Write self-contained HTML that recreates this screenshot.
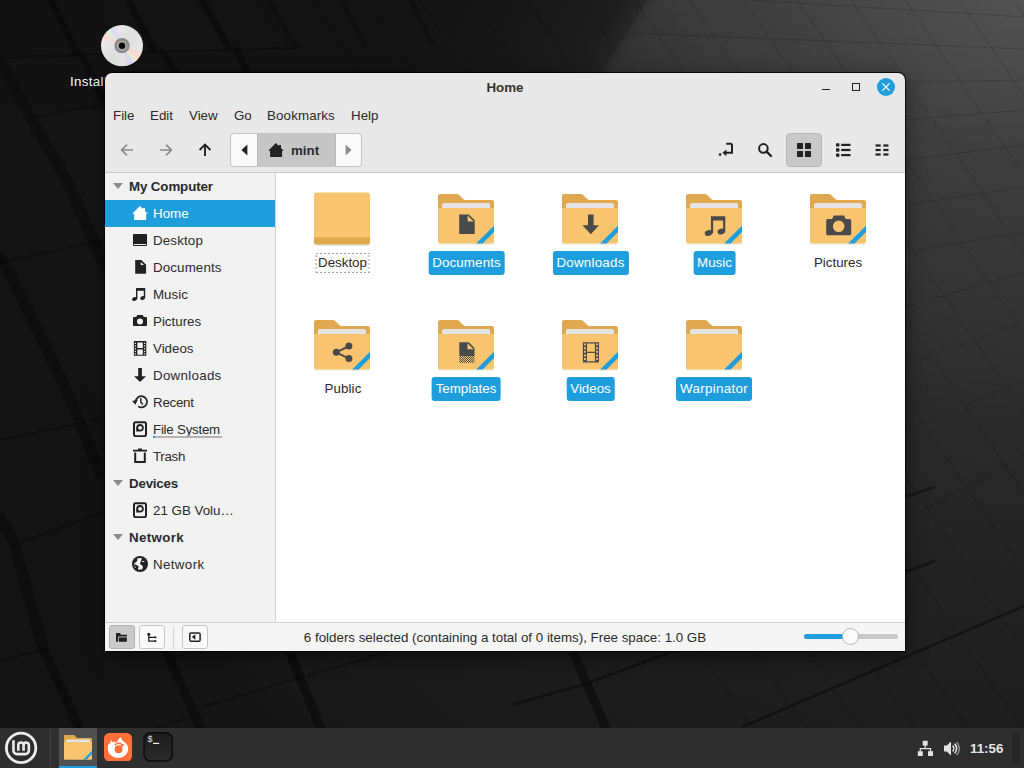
<!DOCTYPE html>
<html>
<head>
<meta charset="utf-8">
<title>Home</title>
<style>
*{box-sizing:border-box;margin:0;padding:0}
html,body{width:1024px;height:768px;overflow:hidden}
body{font-family:"Liberation Sans",sans-serif;font-size:13.33px;color:#2a2a2a;position:relative;background:#161616}
.abs{position:absolute}
#wall{position:absolute;left:0;top:0;width:1024px;height:768px}
/* desktop icon */
#dlabel{position:absolute;left:70px;top:74px;letter-spacing:.3px;color:#fff;font-size:13.33px;white-space:nowrap;text-shadow:0 1px 2px #000}
/* window */
#win{position:absolute;left:105px;top:73px;width:800px;height:578px;background:#e8e8e8;border-radius:7px 7px 0 0;box-shadow:0 0 0 1px rgba(0,0,0,.8),0 6px 20px rgba(0,0,0,.5);overflow:hidden}
#title{position:absolute;left:0;top:0;width:800px;height:28px;text-align:center;font-weight:bold;line-height:30px;color:#333}
.mi{position:absolute;top:35px;line-height:16px;white-space:nowrap}
#tbline{position:absolute;left:0;top:99px;width:800px;height:1px;background:#c9c9c9}
#pathbar{position:absolute;left:125px;top:60px;width:132px;height:34px;border:1px solid #c4c4c4;border-radius:4px;background:#fafafa;overflow:hidden}
#pathmid{position:absolute;left:26px;top:0;width:79px;height:32px;background:#c6c6c6;border-left:1px solid #b8b8b8;border-right:1px solid #b8b8b8}
#viewbtn{position:absolute;left:681px;top:60px;width:36px;height:34px;border:1px solid #b6b6b6;border-radius:4px;background:#c8c8c8}
/* sidebar */
#side{position:absolute;left:0;top:100px;width:170px;height:449px;background:#f2f2f2}
#sideline{position:absolute;left:170px;top:100px;width:1px;height:449px;background:#d4d4d4}
#main{position:absolute;left:171px;top:100px;width:629px;height:449px;background:#fff}
.row{position:absolute;left:0;width:170px;height:27px;line-height:27px;white-space:nowrap}
.row span{position:absolute;left:48px;top:0}
.row svg{position:absolute;left:27px;top:5px;width:16px;height:16px}
.hdr{font-weight:bold}
.hdr span{left:24px}
.hdr i{position:absolute;left:8px;top:10px;width:0;height:0;border-left:5px solid transparent;border-right:5px solid transparent;border-top:6px solid #8c8c8c}
.sel{background:#1f9ede;color:#fff}
.cap{position:absolute;left:48px;top:20px;width:69px;height:2px;background:#b4b4b4}
.cap:before{content:"";position:absolute;left:0;top:0;width:2px;height:2px;background:#1f9ede}
/* status */
#status{position:absolute;left:0;top:549px;width:800px;height:29px;background:#f5f5f5;border-top:1px solid #d0d0d0}
#stext{position:absolute;left:0;top:0;width:800px;text-align:center;line-height:29px;white-space:nowrap}
.sb{position:absolute;top:2px;width:26px;height:24px;border:1px solid #c6c6c6;border-radius:3px;background:#fafafa}
/* files */
.fi{position:absolute;width:64px;height:64px}
.fl{position:absolute;height:24px;line-height:24px;border-radius:3px;text-align:center;white-space:nowrap;transform:translateX(-50%);padding:0 4px}
.fl.s{background:#1f9ede;color:#fff}
/* panel */
#panel{position:absolute;left:0;top:728px;width:1024px;height:40px;background:#2e2e2e}
</style>
</head>
<body>
<svg id="wall" viewBox="0 0 1024 768">
<defs>
<radialGradient id="rg" gradientUnits="userSpaceOnUse" cx="1024" cy="0" r="1050">
<stop offset="0" stop-color="#fff" stop-opacity=".23"/>
<stop offset=".19" stop-color="#fff" stop-opacity=".165"/>
<stop offset=".31" stop-color="#fff" stop-opacity=".13"/>
<stop offset=".40" stop-color="#fff" stop-opacity=".095"/>
<stop offset=".57" stop-color="#fff" stop-opacity=".06"/>
<stop offset=".72" stop-color="#fff" stop-opacity=".04"/>
<stop offset=".95" stop-color="#fff" stop-opacity=".015"/>
<stop offset="1" stop-color="#fff" stop-opacity="0"/>
</radialGradient>
<linearGradient id="cut" gradientUnits="userSpaceOnUse" x1="435" y1="-50" x2="627" y2="57.400">
<stop offset="0" stop-color="#121212" stop-opacity=".96"/><stop offset=".6" stop-color="#141414" stop-opacity=".78"/><stop offset=".86" stop-color="#161616" stop-opacity=".6"/><stop offset="1" stop-color="#181818" stop-opacity="0"/>
</linearGradient>
<linearGradient id="tl" x1="0" y1="0" x2="0" y2="1"><stop offset="0" stop-color="#fff" stop-opacity=".05"/><stop offset="1" stop-color="#fff" stop-opacity="0"/></linearGradient>
</defs>
<rect width="1024" height="768" fill="#141414"/>
<rect width="1024" height="768" fill="url(#rg)"/>
<path d="M648 0H1024V170H540z" fill="url(#tl)"/>
<!-- dark top-left mass with diagonal edge -->
<path d="M0 0H680L600 110H0z" fill="url(#cut)"/>
<rect x="0" y="0" width="105" height="768" fill="#131313" opacity=".6"/>
<!-- tile lines: right (light) zone -->
<g stroke="#000" stroke-opacity=".15" stroke-width="1" fill="none">
<path d="M1013 0 1024 16M959 0 1024 96M905 0 1024 175M851 0 1024 254M797 0 1024 334M743 0 1024 413M689 0 1024 493M635 0 1024 572M581 0 1024 651M527 0 1022 728M473 0 968 728M419 0 914 728M365 0 860 728M311 0 806 728M257 0 752 728"/>
<path d="M628 33 1024 49M752 0 1024 17M905 82 1024 80M905 120 1024 110M905 160 1024 145M905 205 1024 187M905 252 1024 232M905 307 1024 272M905 365 1024 322M905 430 1024 380M905 520 1024 455"/>
</g>
<!-- tile gaps: dark zone -->
<g stroke="#080808" stroke-opacity=".6" fill="none" stroke-linecap="butt">
<path stroke-width="9" d="M43 648 80 730M166 650 201 730M289 650 321 730M572 650 606 728"/>
<path stroke-width="7" d="M50 -2 78 55M80 52 105 102M127 -2 155 52M160 50 180 78M201 -2 230 50M236 48 250 78"/>
<path stroke-width="11" stroke-opacity=".5" d="M-2 57 30 117 66 179 100 255 110 275M-2 255 9 272 44 343 71 400 102 478M-2 514 13 540 44 651"/>
<path stroke-width="5" stroke-opacity=".35" d="M267 -2 296 48M340 -2 366 46M410 -2 432 44"/>
<path stroke-width="2" stroke-opacity=".4" d="M0 660 43 650M199 708 292 680 392 651M156 728 199 714M0 58 78 55 155 52 230 50 296 48M30 118 105 104M0 262 105 240M0 440 105 418M12 545 105 512"/>
<path stroke-width="2.500" stroke-opacity=".5" d="M512 705 582 685 677 650M742 727 1024 606M905 497 935 487M905 572 935 561"/>
</g>
</svg>

<svg class="abs" style="left:99px;top:23px" width="46" height="46" viewBox="0 0 46 46">
<defs><linearGradient id="dg" x1="0" y1="0" x2="1" y2="1"><stop offset="0" stop-color="#f2f2f2"/><stop offset=".5" stop-color="#dedede"/><stop offset="1" stop-color="#f0f0f0"/></linearGradient>
<clipPath id="dc"><ellipse cx="23" cy="22.700" rx="21" ry="20.600"/></clipPath></defs>
<ellipse cx="23" cy="23.600" rx="21" ry="20.600" fill="#000" opacity=".35"/>
<ellipse cx="23" cy="22.700" rx="21" ry="20.600" fill="url(#dg)"/>
<g clip-path="url(#dc)" opacity=".55" transform="rotate(-14 23 22.700)"><path d="M23 22.700 4 10 9 4z" fill="#ffd0c0"/><path d="M23 22.700 9 4 14 1z" fill="#c8f0c8"/><path d="M23 22.700 14 1 19 0z" fill="#c8d0ff"/><path d="M23 22.700 19 0 23 0z" fill="#f0c8f0"/><path d="M23 22.700 42 35 37 42z" fill="#ffd0c0"/><path d="M23 22.700 37 42 32 45z" fill="#f8f0b0"/><path d="M23 22.700 32 45 27 46z" fill="#c8d0ff"/><path d="M23 22.700 27 46 23 46z" fill="#f0c8f0"/></g>
<circle cx="23" cy="22.700" r="7.600" fill="#8a8a8a"/><circle cx="23" cy="22.700" r="5.200" fill="#a6a6a6"/><circle cx="23" cy="22.700" r="3.200" fill="#0c0c0c"/>
</svg>
<div id="dlabel">Install Linux Mint</div>

<div id="win">
<div id="title">Home</div>
<div class="mi" style="left:8px">File</div>
<div class="mi" style="left:45px">Edit</div>
<div class="mi" style="left:84px">View</div>
<div class="mi" style="left:129px">Go</div>
<div class="mi" style="left:162px;letter-spacing:.14px">Bookmarks</div>
<div class="mi" style="left:246px">Help</div>
<div id="pathbar"><svg class="abs" style="left:10px;top:10px" width="7" height="12" viewBox="0 0 7 12"><path d="M6.4.4v11.2L.4 6z" fill="#222"/></svg>
<svg class="abs" style="left:114px;top:10px" width="7" height="12" viewBox="0 0 7 12"><path d="M.6.4v11.2L6.6 6z" fill="#8c8c8c"/></svg>
<div id="pathmid"><svg class="abs" style="left:10px;top:8px" width="16" height="16" viewBox="0 0 16 16"><path fill="#222" d="M7.900 1 .2 8.700h1.900V15h12V8.700h1.700L13 6V3.100h-2V4z"/></svg><b style="position:absolute;left:33px;top:1px;line-height:32px">mint</b>
</div></div>
<div id="viewbtn"></div>
<!-- window buttons (win-relative: abs - (105,73)) -->
<div class="abs" style="left:717px;top:16px;width:8px;height:1px;background:#1e1e1e"></div>
<div class="abs" style="left:747px;top:10px;width:8px;height:8px;border:1px solid #1e1e1e"></div>
<svg class="abs" style="left:771px;top:4px" width="20" height="20" viewBox="0 0 20 20"><circle cx="10" cy="10" r="9" fill="#1f9ede"/><path d="M6.4 6.4l7.2 7.2M13.6 6.4l-7.2 7.2" stroke="#fff" stroke-width="1.25"/></svg>
<!-- nav arrows -->
<svg class="abs" style="left:15px;top:70px" width="14" height="14" viewBox="0 0 14 14"><path d="M13 7H2M7 1.6 1.6 7 7 12.4" fill="none" stroke="#8c8c8c" stroke-width="1.7"/></svg>
<svg class="abs" style="left:54px;top:70px" width="14" height="14" viewBox="0 0 14 14"><path d="M1 7h11M7 1.6 12.4 7 7 12.4" fill="none" stroke="#8c8c8c" stroke-width="1.7"/></svg>
<svg class="abs" style="left:93px;top:70px" width="14" height="14" viewBox="0 0 14 14"><path d="M7 13V2M1.6 7 7 1.6 12.4 7" fill="none" stroke="#222" stroke-width="1.9"/></svg>
<!-- right toolbar icons -->
<svg class="abs" style="left:613px;top:69px" width="16" height="16" viewBox="0 0 16 16"><circle cx="2.100" cy="12.600" r="1.350" fill="#222"/><path d="M8.200 1.800h4.600a1.200 1.200 0 0 1 1.200 1.200v7.800H7" fill="none" stroke="#222" stroke-width="2"/><path d="M4.400 10.800 8.400 7.400v6.800z" fill="#222"/></svg>
<svg class="abs" style="left:652px;top:69px" width="16" height="16" viewBox="0 0 16 16"><circle cx="6.4" cy="6.4" r="4.3" fill="none" stroke="#222" stroke-width="2"/><path d="M9.6 9.6 14 14" stroke="#222" stroke-width="2.4" stroke-linecap="round"/></svg>
<svg class="abs" style="left:691px;top:69px" width="16" height="16" viewBox="0 0 16 16"><g fill="#222"><rect x="1" y="1" width="6" height="6" rx=".6"/><rect x="9" y="1" width="6" height="6" rx=".6"/><rect x="1" y="9" width="6" height="6" rx=".6"/><rect x="9" y="9" width="6" height="6" rx=".6"/></g></svg>
<svg class="abs" style="left:730px;top:69px" width="16" height="16" viewBox="0 0 16 16"><g fill="#222"><rect x="1" y="1.2" width="3.4" height="3.4" rx=".6"/><rect x="1" y="6.3" width="3.4" height="3.4" rx=".6"/><rect x="1" y="11.4" width="3.4" height="3.4" rx=".6"/><rect x="6.200" y="1.800" width="9.300" height="2.200"/><rect x="6.200" y="6.900" width="9.300" height="2.200"/><rect x="6.200" y="12" width="9.300" height="2.200"/></g></svg>
<svg class="abs" style="left:769px;top:69px" width="16" height="16" viewBox="0 0 16 16"><g fill="#222"><rect x="1.500" y="2.400" width="5.200" height="2.200"/><rect x="9.300" y="2.400" width="5.200" height="2.200"/><rect x="1.500" y="6.900" width="5.200" height="2.200"/><rect x="9.300" y="6.900" width="5.200" height="2.200"/><rect x="1.500" y="11.400" width="5.200" height="2.200"/><rect x="9.300" y="11.400" width="5.200" height="2.200"/></g></svg>

<div id="tbline"></div>
<div id="side">
<div class="row hdr" style="top:0"><i></i><span style="letter-spacing:-0.12px">My Computer</span></div>
<div class="row sel" style="top:27px"><svg viewBox="0 0 16 16"><path fill="#fff" d="M7.900 1 .2 8.700h1.900V15h12V8.700h1.700L13 6V3.100h-2V4z"/></svg><span>Home</span></div>
<div class="row" style="top:54px"><svg viewBox="0 0 16 16"><rect x="1" y="2" width="14" height="12" rx="1" fill="#222"/><rect x="2" y="12" width="12" height="1" fill="#f2f2f2"/></svg><span style="letter-spacing:0.16px">Desktop</span></div>
<div class="row" style="top:81px"><svg viewBox="0 0 16 16"><path fill="#222" d="M3.2 1.100h6.200l4.700 4.650V14.800H3.200z"/><path fill="#f2f2f2" d="M8.800 3.100v3h3.200z"/></svg><span style="letter-spacing:0.13px">Documents</span></div>
<div class="row" style="top:108px"><svg viewBox="0 0 16 16"><g fill="#222"><path d="M4 1.900h9.200v10.200h-1.400V4.700H5.400v8.400H4z"/><ellipse cx="2.500" cy="13" rx="2.500" ry="1.900" transform="rotate(-18 2.500 13)"/><ellipse cx="10.700" cy="12" rx="2.500" ry="1.900" transform="rotate(-18 10.700 12)"/></g></svg><span>Music</span></div>
<div class="row" style="top:135px"><svg viewBox="0 0 16 16"><path fill="#222" fill-rule="evenodd" d="M5.2 2h5.6l.9 2H14a1 1 0 0 1 1 1v7a1 1 0 0 1-1 1H2a1 1 0 0 1-1-1V5a1 1 0 0 1 1-1h2.3zM8 5.4a3 3 0 1 0 0 6 3 3 0 0 0 0-6z"/></svg><span>Pictures</span></div>
<div class="row" style="top:162px"><svg viewBox="0 0 16 16"><path fill="#222" fill-rule="evenodd" d="M1.9 1.1h12.400v14.700H1.900zM5.400 2.400v5.500h5.450V2.400zM5.400 9.400v5.400h5.450V9.400zM2.80 2.80h1.2v1.2h-1.2zM12.00 2.80h1.2v1.2h-1.2zM2.80 5.30h1.2v1.2h-1.2zM12.00 5.30h1.2v1.2h-1.2zM2.80 8.10h1.2v1.2h-1.2zM12.00 8.10h1.2v1.2h-1.2zM2.80 10.70h1.2v1.2h-1.2zM12.00 10.70h1.2v1.2h-1.2zM2.80 13.20h1.2v1.2h-1.2zM12.00 13.20h1.2v1.2h-1.2z"/></svg><span>Videos</span></div>
<div class="row" style="top:189px"><svg viewBox="0 0 16 16"><path fill="#222" d="M6.200 .9h3.700v8.400H14L8.050 15.100 2.100 9.300h4.100z"/></svg><span style="letter-spacing:0.29px">Downloads</span></div>
<div class="row" style="top:216px"><svg viewBox="0 0 16 16"><path fill="none" stroke="#222" stroke-width="1.700" d="M6.200 12.400A5.600 5.600 0 1 0 3.800 7.400"/><path fill="#222" d="M.1 7 5.800 5.700 3.400 10.800z"/><path fill="none" stroke="#222" stroke-width="1.400" d="M8.800 3.900v4.400l2.200 2.100"/></svg><span style="letter-spacing:-0.25px">Recent</span></div>
<div class="row" style="top:243px"><svg viewBox="0 0 16 16"><rect x="2" y="1.2" width="12" height="14" rx="1.6" fill="none" stroke="#222" stroke-width="2"/><path fill="#222" fill-rule="evenodd" d="M8 3a3.800 3.800 0 0 1 0 7.600H4.200V6.800A3.800 3.800 0 0 1 8 3zM8.100 4.900a1.950 1.950 0 1 0 0 3.900 1.950 1.950 0 0 0 0-3.900z"/></svg><span style="letter-spacing:-0.24px">File System</span><b class="cap"></b></div>
<div class="row" style="top:270px"><svg viewBox="0 0 16 16"><path fill="#222" d="M6 .6h4v1.2h5v1.7H1V1.8h5z"/><path fill="none" stroke="#222" stroke-width="2" d="M3.2 4.5v9.6h9.6V4.5"/></svg><span style="letter-spacing:-0.30px">Trash</span></div>
<div class="row hdr" style="top:297px"><i></i><span style="letter-spacing:-0.20px">Devices</span></div>
<div class="row" style="top:324px"><svg viewBox="0 0 16 16"><rect x="2" y="1.2" width="12" height="14" rx="1.6" fill="none" stroke="#222" stroke-width="2"/><path fill="#222" fill-rule="evenodd" d="M8 3a3.800 3.800 0 0 1 0 7.600H4.200V6.800A3.800 3.800 0 0 1 8 3zM8.100 4.900a1.950 1.950 0 1 0 0 3.900 1.950 1.950 0 0 0 0-3.900z"/></svg><span>21 GB Volu…</span></div>
<div class="row hdr" style="top:351px"><i></i><span style="letter-spacing:.34px">Network</span></div>
<div class="row" style="top:378px"><svg viewBox="0 0 16 16"><circle cx="8" cy="8" r="8" fill="#222"/><path fill="#f2f2f2" d="M5.400 2.300 9.750 2.100 9.400 4.100 8.500 6.300 8 8.200 9.750 9.100 11 10.700 10.400 13.200 6.300 13.800 6 12.250 6.800 10.700 5.400 9.400 3.800 8.500H2.250L2.100 7.600 3.800 6.300 5.100 5.100zM10.100 5h2.150v.9H10.100zM2.250 9.400h.8v1h-.8zM3.200 11h.7v.9h-.7z"/></svg><span style="letter-spacing:.37px">Network</span></div>
</div>
<div id="sideline"></div>
<div id="main"></div>
<svg width="0" height="0" style="position:absolute">
<defs>
<pattern id="chk" width="2" height="2" patternUnits="userSpaceOnUse"><rect width="1" height="1" fill="#4a4a4a"/><rect x="1" y="1" width="1" height="1" fill="#4a4a4a"/></pattern>
<symbol id="fold" viewBox="0 0 64 64">
<path d="M5 58h54" stroke="#000" stroke-opacity=".12" stroke-width="1.200" stroke-linecap="round"/>
<path fill="#e0a84f" d="M4 10a2 2 0 0 1 2-2h17.2a2 2 0 0 1 1.4.6l5.2 5a2 2 0 0 0 1.4.4H58a2 2 0 0 1 2 2v12H4z"/>
<path fill="#e4e4e4" d="M8 19a2 2 0 0 1 2-2h44a2 2 0 0 1 2 2v5H8z"/>
<path fill="#f8c46f" d="M4 22h56v33.5a2 2 0 0 1-2 2H6a2 2 0 0 1-2-2z"/>
<path fill="#1f9ede" d="M60 39.7v6.4L48.6 57.5h-6.4z"/>
</symbol>
</defs>
</svg>
<!-- row 1 -->
<svg class="fi" style="left:205px;top:113px" viewBox="0 0 64 64"><path d="M5 59.100h54" stroke="#000" stroke-opacity=".12" stroke-width="1.200" stroke-linecap="round"/><path fill="#e0a84f" d="M4 50h56v6.6a2 2 0 0 1-2 2H6a2 2 0 0 1-2-2z"/><path fill="#f8c46f" d="M4 8.5a2 2 0 0 1 2-2h52a2 2 0 0 1 2 2v42.8H4z"/></svg>
<div class="fl" style="left:237.500px;top:180px;height:20px;line-height:19px;border-radius:0;padding:0 3px;background:repeating-linear-gradient(90deg,#a4a4a4 0 2px,transparent 2px 4px) 0 0/100% 1px no-repeat,repeating-linear-gradient(90deg,#a4a4a4 0 2px,transparent 2px 4px) 0 100%/100% 1px no-repeat,repeating-linear-gradient(0deg,#a4a4a4 0 2px,transparent 2px 4px) 0 0/1px 100% no-repeat,repeating-linear-gradient(0deg,#a4a4a4 0 2px,transparent 2px 4px) 100% 0/1px 100% no-repeat">Desktop</div>

<svg class="fi" style="left:329px;top:113px" viewBox="0 0 64 64"><use href="#fold"/><path fill="#4a4a4a" d="M25.2 28.4h9.6l5.9 5.9v13.7H25.2z"/><path fill="#f8c46f" d="M33.6 29.4l6.1 6.1h-6.1z"/></svg>
<div class="fl s" style="left:361.5px;top:178px;letter-spacing:0.14px">Documents</div>

<svg class="fi" style="left:453px;top:113px" viewBox="0 0 64 64"><use href="#fold"/><path fill="#4a4a4a" d="M30 28.6h5.6v10.6h5.4L32.8 48.3 24.5 39.2H30z"/></svg>
<div class="fl s" style="left:485.5px;top:178px;letter-spacing:0.24px">Downloads</div>

<svg class="fi" style="left:577px;top:113px" viewBox="0 0 64 64"><use href="#fold"/><g fill="#4a4a4a" transform="translate(22.700 27.500) scale(1.560 1.500)"><path d="M4 1.900h9.200v10.200h-1.400V4.700H5.400v8.400H4z"/><ellipse cx="2.500" cy="13" rx="2.500" ry="1.900" transform="rotate(-18 2.500 13)"/><ellipse cx="10.700" cy="12" rx="2.500" ry="1.900" transform="rotate(-18 10.700 12)"/></g></svg>
<div class="fl s" style="left:609.5px;top:178px">Music</div>

<svg class="fi" style="left:701px;top:113px" viewBox="0 0 64 64"><use href="#fold"/><path fill="#4a4a4a" fill-rule="evenodd" d="M27.6 29.4h10.6l1.4 3.5h4.1a1.5 1.5 0 0 1 1.5 1.5v13.4a1.5 1.5 0 0 1-1.5 1.5H21.7a1.5 1.5 0 0 1-1.5-1.5V34.4a1.5 1.5 0 0 1 1.5-1.5h4.5zM32.7 34.5a5.8 5.8 0 1 0 0 11.6 5.8 5.8 0 0 0 0-11.6z"/></svg>
<div class="fl" style="left:733px;top:178px">Pictures</div>

<!-- row 2 -->
<svg class="fi" style="left:205px;top:239px" viewBox="0 0 64 64"><use href="#fold"/><g fill="#4a4a4a"><circle cx="26.3" cy="40.3" r="3.5"/><circle cx="38.9" cy="34.1" r="3.5"/><circle cx="38.9" cy="46.6" r="3.5"/></g><path d="M38.9 34.1 26.3 40.3 38.9 46.6" fill="none" stroke="#4a4a4a" stroke-width="1.9"/></svg>
<div class="fl" style="left:238px;top:304px;letter-spacing:0.10px">Public</div>

<svg class="fi" style="left:329px;top:239px" viewBox="0 0 64 64"><use href="#fold"/><path fill="#4a4a4a" d="M25.3 30.3h9.4l5.8 5.8v8H25.3z"/><path fill="#f8c46f" d="M33.5 31.3l6 6h-6z"/><rect x="25.3" y="44.100" width="15.200" height="6.800" fill="url(#chk)"/></svg>
<div class="fl s" style="left:361px;top:304px">Templates</div>

<svg class="fi" style="left:453px;top:239px" viewBox="0 0 64 64"><use href="#fold"/><path fill="#4a4a4a" fill-rule="evenodd" d="M24.9 30.3H41v20.2H24.9zM29 31.6v8.2h7.9v-8.2zM29 41v8.2h7.9V41zM26 31.6v2h1.8v-2zM26 35.2v2h1.8v-2zM26 38.8v2h1.8v-2zM26 42.4v2h1.8v-2zM26 46v2h1.8v-2zM38.1 31.6v2h1.8v-2zM38.1 35.2v2h1.8v-2zM38.1 38.8v2h1.8v-2zM38.1 42.4v2h1.8v-2zM38.1 46v2h1.8v-2z"/></svg>
<div class="fl s" style="left:485.5px;top:304px">Videos</div>

<svg class="fi" style="left:577px;top:239px" viewBox="0 0 64 64"><use href="#fold"/></svg>
<div class="fl s" style="left:609px;top:304px;letter-spacing:0.33px">Warpinator</div>

<div id="status"><div class="sb" style="left:4px;background:#cacaca;border-color:#b2b2b2"><svg class="abs" style="left:4px;top:3px" width="16" height="16" viewBox="0 0 16 16"><path fill="#222" d="M2 4h4.100l.8 1.700H13v1.800H4.200v5.300H2z"/><path fill="#222" d="M5 8.400h7.900v4.400H5z"/></svg></div>
<div class="sb" style="left:34px"><svg class="abs" style="left:4px;top:3px" width="16" height="16" viewBox="0 0 16 16"><circle cx="4.8" cy="5.2" r="1.5" fill="#222"/><path d="M4.8 5v7.1h6M4.8 8.3h6" fill="none" stroke="#222" stroke-width="1.3"/><circle cx="11.3" cy="8.3" r="1.15" fill="#222"/><circle cx="11.3" cy="12.1" r="1.15" fill="#222"/></svg></div>
<div class="abs" style="left:68px;top:4px;width:1px;height:22px;background:#d6d6d6"></div>
<div class="sb" style="left:77px"><svg class="abs" style="left:4px;top:3px" width="16" height="16" viewBox="0 0 16 16"><rect x="2.800" y="3.900" width="10.300" height="8.400" rx="1.300" fill="none" stroke="#222" stroke-width="1.500"/><path d="M8.400 5.300v5.400L4.700 8z" fill="#222"/></svg></div>
<div class="abs" style="left:699px;top:11px;width:94px;height:5px;border-radius:3px;background:#c8c8c8"></div>
<div class="abs" style="left:699px;top:11px;width:44px;height:5px;border-radius:3px;background:#1f9ede"></div>
<div class="abs" style="left:737px;top:5px;width:17px;height:17px;border-radius:50%;background:#fbfbfb;border:1px solid #b6b6b6"></div>
<div id="stext">6 folders selected (containing a total of 0 items), Free space: 1.0 GB</div></div>
</div>

<div id="panel">
<svg class="abs" style="left:3px;top:2px" width="36" height="36" viewBox="0 0 36 36"><circle cx="18.100" cy="17.900" r="14.700" fill="none" stroke="#ececec" stroke-width="2.800"/><path d="M10.450 10.200V20.500a3.600 3.600 0 0 0 3.600 3.600h8.200a3.600 3.600 0 0 0 3.600-3.600V15.150a2.630 2.630 0 0 0-5.260 0V20.850M20.600 15.150a2.650 2.650 0 0 0-5.300 0V20.850" fill="none" stroke="#ececec" stroke-width="2.600"/></svg>
<div class="abs" style="left:50px;top:2px;width:1px;height:36px;background:#454545"></div>
<div class="abs" style="left:59px;top:0;width:38px;height:40px;background:#505050"></div>
<div class="abs" style="left:59px;top:38px;width:38px;height:2px;background:#1f9ede"></div>
<svg class="abs" style="left:62px;top:3px" width="32" height="32" viewBox="0 0 64 64"><use href="#fold"/></svg>
<svg class="abs" style="left:104px;top:4.500px" width="28" height="28.500" viewBox="0 0 28 28.500"><rect width="28" height="28.500" rx="5.500" fill="#ff7139"/><path fill="#fff" d="M14 24.800C8.200 24.800 3.800 20.600 3.800 15.200C3.800 13.400 4.300 11.600 5.200 10.200L5.700 11.400C6 9.700 6.800 8.200 7.800 7.200L8.700 9.500L10.100 8.300L11.300 9.900C12 9.300 12.800 8.800 13.600 8.600C14 6.800 15.200 5.200 16.800 4.100C17.200 5.900 18.300 7.300 19.600 8.400C21 9.400 22.300 10.400 23 11.800C23.700 13 24.200 14.200 24.200 15.400C24.200 20.600 19.800 24.800 14 24.800Z"/><circle cx="14.600" cy="16.200" r="3.900" fill="#ff7139"/><path d="M11.200 11.600A6 6 0 0 1 18.800 12" fill="none" stroke="#ff7139" stroke-width="1.500" stroke-linecap="round"/><path d="M18.800 12 17.400 13.400" stroke="#ff7139" stroke-width="1.900" stroke-linecap="round"/></svg>
<svg class="abs" style="left:143px;top:4px" width="30" height="30" viewBox="0 0 30 30"><defs><linearGradient id="tg" x1="0" y1="0" x2="0" y2="1"><stop offset="0" stop-color="#1c1c1c"/><stop offset="1" stop-color="#2b2b2b"/></linearGradient></defs><rect x="1" y=".8" width="28.400" height="28.200" rx="6.500" fill="url(#tg)" stroke="#0c0c0c" stroke-width="1.500"/><text x="4.400" y="10.200" font-family="Liberation Mono" font-size="8.500" fill="#f0f0f0">$</text><rect x="10" y="10.800" width="6.200" height="1.200" fill="#f0f0f0"/></svg>
<!-- tray -->
<svg class="abs" style="left:917px;top:12px" width="17" height="17" viewBox="0 0 17 17"><g fill="#e2e2e2"><rect x="5.700" y=".8" width="5" height="4.800"/><rect x=".8" y="11.200" width="5" height="4.800"/><rect x="11" y="11.200" width="5" height="4.800"/></g><path d="M8.200 5v3.600M3.300 11.600V8.600h10.200v3" fill="none" stroke="#e2e2e2" stroke-width="1.200"/></svg>
<svg class="abs" style="left:943px;top:12px" width="17" height="17" viewBox="0 0 17 17"><path d="M1 5.600h2.800L8 1.600v13.800L3.800 11.400H1z" fill="#e2e2e2"/><path d="M9.600 5.600a4.200 4.200 0 0 1 0 5.800" fill="none" stroke="#e2e2e2" stroke-width="1.600"/><path d="M11.600 3.600a7 7 0 0 1 0 9.800" fill="none" stroke="#e2e2e2" stroke-width="1.600"/><path d="M13.700 1.900a9.600 9.600 0 0 1 0 13.200" fill="none" stroke="#8a8a8a" stroke-width="1.500"/></svg>
<div class="abs" style="left:970px;top:0;line-height:41px;font-weight:bold;color:#e6e6e6;font-size:13.330px;white-space:nowrap">11:56</div>
<div class="abs" style="left:1012px;top:4px;width:8px;height:31px;background:#252525"></div>
</div>

</body>
</html>
